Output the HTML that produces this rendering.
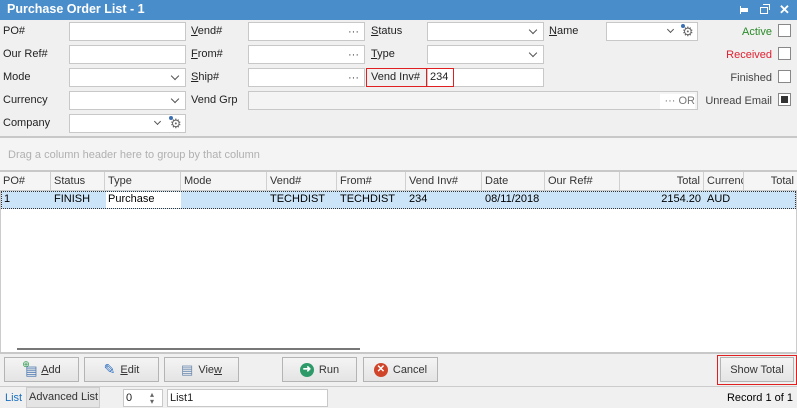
<!DOCTYPE html>
<html><head><style>
*{box-sizing:border-box;margin:0;padding:0}
body{width:797px;height:408px;overflow:hidden;background:#f0f0f0;font-family:"Liberation Sans",sans-serif;font-size:11px;color:#222;position:relative}
.a{position:absolute}
.t{position:absolute;font-size:11px;line-height:18px;white-space:nowrap}
.r{text-align:right}
.in{position:absolute;height:19px;background:#fff;border:1px solid #c8c8c8}
.dd::after{content:"";position:absolute;right:7px;top:4px;width:5px;height:5px;border-right:1.5px solid #555;border-bottom:1.5px solid #555;transform:rotate(45deg)}
.dots{position:absolute;right:5px;top:2px;font-size:11px;color:#444;line-height:15px}
.cb{position:absolute;width:13px;height:13px;background:#fff;border:1px solid #888}
.hd{position:absolute;top:172px;height:19px;border-right:1px solid #d0d0d0;padding-left:3px;line-height:19px;color:#333;overflow:hidden;white-space:nowrap}
.rc{position:absolute;top:191px;height:17px;padding-left:3px;line-height:17px;color:#000}
.btn{position:absolute;top:357px;height:25px;background:linear-gradient(#f4f4f4,#e4e4e4);border:1px solid #b4b4b4;display:flex;align-items:center;justify-content:center;gap:5px;color:#333}
.ic{display:inline-block;width:14px;height:14px;border-radius:50%;color:#fff;font-size:10px;line-height:14px;text-align:center;font-weight:bold}
u{text-decoration:underline}
</style></head><body>
<div class="a" style="left:0;top:0;width:797px;height:20px;background:#4a8dcb"></div>
<div class="t" style="left:7px;top:0;color:#fff;font-weight:bold;font-size:12.5px;line-height:19px">Purchase Order List - 1</div>
<div class="a" style="left:741px;top:8px;width:7px;height:4px;background:#fff"></div>
<div class="a" style="left:740px;top:6px;width:1px;height:8px;background:#fff"></div>
<div class="a" style="left:760px;top:7px;width:8px;height:7px;border:1.5px solid #fff"></div>
<div class="a" style="left:763px;top:4px;width:7px;height:6px;border-top:1.5px solid #fff;border-right:1.5px solid #fff"></div>
<div class="t" style="left:779px;top:0;color:#fff;font-size:13px;line-height:20px;font-weight:bold">✕</div>

<div class="t" style="left:3px;top:22px">PO#</div>
<div class="t" style="left:3px;top:45px">Our Ref#</div>
<div class="t" style="left:3px;top:68px">Mode</div>
<div class="t" style="left:3px;top:91px">Currency</div>
<div class="t" style="left:3px;top:114px">Company</div>
<div class="in" style="left:69px;top:22px;width:117px"></div>
<div class="in" style="left:69px;top:45px;width:117px"></div>
<div class="in dd" style="left:69px;top:68px;width:117px"></div>
<div class="in dd" style="left:69px;top:91px;width:117px"></div>
<div class="in" style="left:69px;top:114px;width:117px"><div class="a" style="left:85px;top:4px;width:5px;height:5px;border-right:1.5px solid #555;border-bottom:1.5px solid #555;transform:rotate(45deg)"></div><div class="t" style="left:100px;top:0px;color:#666;font-size:13px">⚙</div><div class="a" style="left:99px;top:1px;width:4px;height:4px;background:#3a6fb5;border-radius:50%"></div></div>

<div class="t" style="left:191px;top:22px"><u>V</u>end#</div>
<div class="t" style="left:191px;top:45px"><u>F</u>rom#</div>
<div class="t" style="left:191px;top:68px"><u>S</u>hip#</div>
<div class="t" style="left:191px;top:91px">Vend Grp</div>
<div class="in" style="left:248px;top:22px;width:117px"><span class="dots">···</span></div>
<div class="in" style="left:248px;top:45px;width:117px"><span class="dots">···</span></div>
<div class="in" style="left:248px;top:68px;width:117px"><span class="dots">···</span></div>
<div class="in" style="left:248px;top:91px;width:450px;background:#f4f4f4"><span class="dots" style="color:#777;background:#fff;padding-left:4px;right:2px">··· OR</span></div>

<div class="t" style="left:371px;top:22px"><u>S</u>tatus</div>
<div class="t" style="left:371px;top:45px"><u>T</u>ype</div>
<div class="in dd" style="left:427px;top:22px;width:117px"></div>
<div class="in dd" style="left:427px;top:45px;width:117px"></div>
<div class="in" style="left:427px;top:68px;width:117px"></div>
<div class="a" style="left:366px;top:68px;width:88px;height:19px;border:1px solid #e02020"></div>
<div class="t" style="left:371px;top:68px">Vend Inv#</div>
<div class="a" style="left:426px;top:68px;width:1px;height:19px;background:#e02020"></div>
<div class="t" style="left:430px;top:68px">234</div>

<div class="t" style="left:549px;top:22px"><u>N</u>ame</div>
<div class="in" style="left:606px;top:22px;width:92px"><div class="a" style="left:61px;top:4px;width:5px;height:5px;border-right:1.5px solid #555;border-bottom:1.5px solid #555;transform:rotate(45deg)"></div><div class="t" style="left:75px;top:0px;color:#666;font-size:13px">⚙</div><div class="a" style="left:74px;top:1px;width:4px;height:4px;background:#3a6fb5;border-radius:50%"></div></div>

<div class="t r" style="left:690px;width:82px;top:23px;color:#2a8a2a">Active</div>
<div class="t r" style="left:690px;width:82px;top:46px;color:#e02030">Received</div>
<div class="t r" style="left:690px;width:82px;top:69px;color:#444">Finished</div>
<div class="t r" style="left:690px;width:82px;top:92px;color:#444">Unread Email</div>
<div class="cb" style="left:778px;top:24px"></div>
<div class="cb" style="left:778px;top:47px"></div>
<div class="cb" style="left:778px;top:70px"></div>
<div class="cb" style="left:778px;top:93px"><div class="a" style="left:2px;top:2px;width:7px;height:7px;background:#333"></div></div>

<div class="a" style="left:0;top:136px;width:797px;height:36px;background:#f4f4f4;border-top:2px solid #c8c8c8;border-bottom:2px solid #c8c8c8"></div>
<div class="t" style="left:8px;top:146px;color:#b0b0b0">Drag a column header here to group by that column</div>

<div class="a" style="left:0;top:172px;width:797px;height:181px;background:#fff;border-left:1px solid #ccc;border-right:1px solid #ccc"></div>
<div class="a" style="left:0;top:172px;width:797px;height:19px;background:#f5f5f5;border-bottom:1px solid #ccc"></div>
<div class="hd" style="left:0;width:51px">PO#</div>
<div class="hd" style="left:51px;width:54px">Status</div>
<div class="hd" style="left:105px;width:76px">Type</div>
<div class="hd" style="left:181px;width:86px">Mode</div>
<div class="hd" style="left:267px;width:70px">Vend#</div>
<div class="hd" style="left:337px;width:69px">From#</div>
<div class="hd" style="left:406px;width:76px">Vend Inv#</div>
<div class="hd" style="left:482px;width:63px">Date</div>
<div class="hd" style="left:545px;width:75px">Our Ref#</div>
<div class="hd" style="left:620px;width:84px;text-align:right;padding-right:3px">Total</div>
<div class="hd" style="left:704px;width:40px">Currency</div>
<div class="hd" style="left:744px;width:53px;text-align:right;padding-right:3px;border:none">Total</div>
<div class="a" style="left:1px;top:191px;width:795px;height:18px;background:#cce4f7;border:1px dotted #333"></div>
<div class="a" style="left:106px;top:192px;width:75px;height:16px;background:#fff"></div>
<div class="rc" style="left:1px">1</div>
<div class="rc" style="left:51px">FINISH</div>
<div class="rc" style="left:105px">Purchase</div>
<div class="rc" style="left:267px">TECHDIST</div>
<div class="rc" style="left:337px">TECHDIST</div>
<div class="rc" style="left:406px">234</div>
<div class="rc" style="left:482px">08/11/2018</div>
<div class="rc" style="left:620px;width:84px;text-align:right;padding-right:3px">2154.20</div>
<div class="rc" style="left:704px">AUD</div>
<div class="a" style="left:17px;top:348px;width:343px;height:2px;background:#777"></div>
<div class="a" style="left:0;top:352px;width:797px;height:2px;background:#c8c8c8"></div>

<div class="btn" style="left:4px;width:75px"><span style="position:relative;width:14px;height:16px"><span style="position:absolute;left:0;top:-3px;color:#2a9a4a;font-size:9px">⊕</span><span style="position:absolute;left:3px;top:1px;color:#4a78b0;font-size:13px">▤</span></span><span><u>A</u>dd</span></div>
<div class="btn" style="left:84px;width:75px"><span style="color:#2d6fc0;font-size:14px">✎</span><span><u>E</u>dit</span></div>
<div class="btn" style="left:164px;width:75px"><span style="color:#6a8ab0;font-size:13px">▤</span><span>Vie<u>w</u></span></div>
<div class="btn" style="left:282px;width:75px"><span class="ic" style="background:#2e9a6a">➜</span><span>Run</span></div>
<div class="btn" style="left:363px;width:75px"><span class="ic" style="background:#d0452a">✕</span><span>Cancel</span></div>
<div class="a" style="left:717px;top:355px;width:80px;height:30px;border:1px solid #e02020"></div>
<div class="btn" style="left:720px;width:74px">Show Total</div>

<div class="a" style="left:0;top:386px;width:797px;height:22px;background:#f0f0f0;border-top:1px solid #ccc"></div>
<div class="t" style="left:5px;top:389px;color:#1a6fc0">List</div>
<div class="a" style="left:26px;top:387px;width:74px;height:21px;background:#e4e4e4;border:1px solid #ccc"></div>
<div class="t" style="left:29px;top:388px;color:#333">Advanced List</div>
<div class="in" style="left:123px;top:389px;width:40px;height:18px"><span class="t" style="left:2px;top:-1px">0</span><span class="t" style="left:26px;top:1px;font-size:8px;line-height:7px;color:#666">▴<br>▾</span></div>
<div class="in" style="left:167px;top:389px;width:161px;height:18px"><span class="t" style="left:2px;top:-1px">List1</span></div>
<div class="t r" style="left:693px;width:100px;top:389px;color:#000">Record 1 of 1</div>
</body></html>
